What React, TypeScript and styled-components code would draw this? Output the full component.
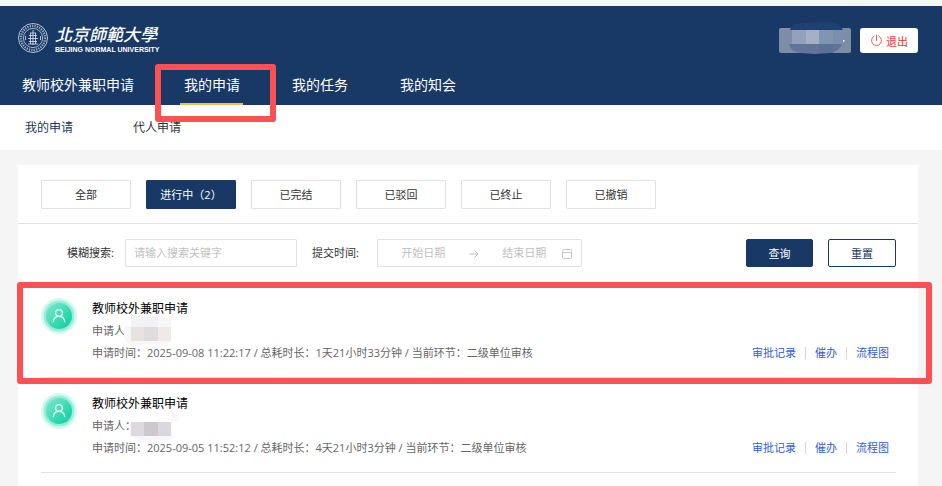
import React from "react";
import styled, { createGlobalStyle } from "styled-components";

const navy = "#183866";
const line = "#e1e2e7";
const highlight = "#fd5151";

const GlobalStyle = createGlobalStyle`
  *, *::before, *::after { box-sizing: border-box; }
  body {
    margin: 0;
    background: #f5f5f5;
    color: #333;
    font-family: "Open Sans", "Noto Sans CJK SC", sans-serif;
    font-size: 11px;
  }
  button, input { font-family: inherit; font-size: inherit; margin: 0; }
  a { text-decoration: none; }
`;

const Page = styled.div`
  position: relative;
  padding-top: 6px;
  min-height: 100vh;
  display: flex;
  flex-direction: column;
  overflow: hidden;
`;

const Header = styled.header`
  background: ${navy};
  color: #fff;
`;

const TopBar = styled.div`
  display: flex;
  justify-content: space-between;
  align-items: flex-start;
  min-height: 59px;
  padding: 16px 24px 0 18px;
`;

const Account = styled.div`
  display: flex;
  gap: 9px;
  padding-top: 6px;
`;

const UserButton = styled.button`
  position: relative;
  width: 72px;
  height: 25px;
  border: 0;
  border-radius: 2px;
  background: #7c8da8;
  padding: 0;
`;

const UserMask = styled.svg`
  position: absolute;
  left: 9px;
  top: -7px;
`;

const LogoutButton = styled.button`
  display: flex;
  align-items: center;
  justify-content: center;
  gap: 3px;
  width: 58px;
  height: 25px;
  border: 0;
  border-radius: 3px;
  background: #fff;
  color: #e8382f;
  padding: 0;
`;

const MainNav = styled.nav`
  display: flex;
  padding-left: 22px;
`;

const MainLink = styled.a<{ $lead?: boolean; $active?: boolean }>`
  position: relative;
  flex: 0 0 ${(p) => (p.$lead ? 162 : 108)}px;
  color: #fff;
  font-size: 14px;
  line-height: 40px;
  white-space: nowrap;
  ${(p) =>
    p.$active &&
    `&::after {
      content: "";
      position: absolute;
      left: -4px;
      bottom: 0;
      width: 63px;
      height: 2px;
      background: #f7bd51;
    }`}
`;

const SubNav = styled.nav`
  display: flex;
  padding-left: 25px;
  background: #fff;
`;

const SubLink = styled.a<{ $active?: boolean }>`
  flex: 0 0 108px;
  color: ${(p) => (p.$active ? navy : "#333")};
  font-size: 12px;
  line-height: 45px;
`;

const Card = styled.main`
  position: relative;
  flex: 1;
  margin: 15px 24px 0 18px;
  background: #fff;
`;

const Filters = styled.div`
  display: flex;
  gap: 15px;
  padding: 15px 23px 14px;
  border-bottom: 1px solid ${line};
`;

const FilterButton = styled.button<{ $active?: boolean }>`
  width: 90px;
  height: 29px;
  padding: 0 0 2px;
  border: 1px solid ${(p) => (p.$active ? navy : line)};
  border-radius: 1px;
  background: ${(p) => (p.$active ? navy : "#fff")};
  color: ${(p) => (p.$active ? "#fff" : "#333")};
`;

const SearchForm = styled.form`
  display: flex;
  align-items: center;
  gap: 15px;
  padding: 15px 22px 16px 49px;
`;

const Field = styled.div<{ $gap: number }>`
  display: flex;
  align-items: center;
  gap: ${(p) => p.$gap}px;
`;

const Label = styled.label`
  padding-bottom: 2px;
  white-space: nowrap;
`;

const TextInput = styled.input`
  width: 172px;
  height: 28px;
  padding: 0 8px 2px;
  border: 1px solid ${line};
  border-radius: 1px;
  outline: 0;
  &::placeholder { color: #bfbfbf; }
`;

const DateRange = styled.div`
  display: flex;
  align-items: center;
  width: 205px;
  height: 28px;
  padding: 0 9px 0 10px;
  border: 1px solid ${line};
  border-radius: 1px;
`;

const DateInput = styled.input`
  flex: 1;
  min-width: 0;
  padding: 0 0 2px;
  border: 0;
  outline: 0;
  background: none;
  text-align: center;
  &::placeholder { color: #bfbfbf; }
`;

const ArrowIcon = styled.svg`
  margin: 2px 10px 0;
`;

const CalendarIcon = styled.svg`
  margin: 1px 0 0 2px;
`;

const Actions = styled.div`
  display: flex;
  gap: 15px;
  margin-left: auto;
`;

const ActionButton = styled.button<{ $primary?: boolean }>`
  width: ${(p) => (p.$primary ? 67 : 68)}px;
  height: 28px;
  padding: 0;
  border: 1px solid ${navy};
  border-radius: 2px;
  background: ${(p) => (p.$primary ? navy : "#fff")};
  color: ${(p) => (p.$primary ? "#fff" : navy)};
`;

const List = styled.ul`
  list-style: none;
  margin: 0 22px 0 23px;
  padding: 0;
`;

const Item = styled.li`
  display: flex;
  gap: 15px;
  padding: 15px 7px 13px 0;
  border-bottom: 1px solid ${line};
`;

const Avatar = styled.svg`
  flex: none;
`;

const Info = styled.div`
  flex: 1;
  color: #666;
  line-height: 22px;
`;

const Title = styled.h2`
  margin: 0;
  color: #000;
  font-size: 12px;
  font-weight: 400;
  line-height: 22px;
`;

const Applicant = styled.div`
  position: relative;
`;

const Mask = styled.svg`
  position: absolute;
  left: 31px;
  top: -6px;
`;

const Links = styled.div`
  display: flex;
  align-self: flex-end;
  align-items: center;
  line-height: 22px;
`;

const RecordLink = styled.a`
  color: #2f5ddb;
  & + & {
    display: flex;
    align-items: center;
  }
  & + &::before {
    content: "";
    width: 1px;
    height: 12px;
    margin: 0 9px;
    background: #d6d6d6;
  }
`;

const NavHighlight = styled.div`
  position: absolute;
  left: 155px;
  top: 64px;
  width: 121px;
  height: 58px;
  border: 6px solid ${highlight};
  border-radius: 3px;
  pointer-events: none;
`;

const ItemHighlight = styled.div`
  position: absolute;
  left: -1px;
  right: -14px;
  top: 117px;
  height: 102px;
  border: 6px solid ${highlight};
  border-radius: 3px;
  pointer-events: none;
`;

const Logo = () => (
  <svg width="144" height="36" viewBox="0 0 144 36" role="img" aria-label="北京师范大学">
    <g fill="none" stroke="#dfe6ef">
      <circle cx="15" cy="16" r="14.5" strokeWidth="0.8" />
      <circle cx="15" cy="16" r="12" strokeWidth="2.4" strokeDasharray="1.3 1.1" opacity="0.65" />
      <circle cx="15" cy="16" r="9.6" strokeWidth="0.7" />
      <path d="M15 8v2M12 11h6M11 13.5h8M10 16.5h10M11 19.5h8M10 22h10M12.500 11v11M15 10v13M17.500 11v11" strokeWidth="0.8" />
      <path d="M7.500 14v4M22.500 14v4" strokeWidth="0.8" />
    </g>
    <text x="37" y="19" fill="#fff" fontSize="17" fontStyle="italic" fontWeight="500" fontFamily="'Noto Sans CJK TC', sans-serif">
      北京師範大學
    </text>
    <text x="37" y="30" fill="#fff" fontSize="7" fontWeight="700" fontFamily="'Liberation Sans', sans-serif">
      BEIJING NORMAL UNIVERSITY
    </text>
  </svg>
);

const PersonAvatar = () => (
  <Avatar width="36" height="36" viewBox="0 0 36 36" aria-hidden="true">
    <defs>
      <linearGradient id="avatarFill" x1="0" y1="0" x2="1" y2="1">
        <stop offset="0" stopColor="#80e8cf" />
        <stop offset="1" stopColor="#04cf9d" />
      </linearGradient>
    </defs>
    <circle cx="18" cy="18" r="18" fill="#d8f7ef" />
    <circle cx="18" cy="18" r="15.500" fill="#99edd9" />
    <circle cx="18" cy="18" r="13" fill="url(#avatarFill)" />
    <g fill="none" stroke="#effffb" strokeWidth="1.2" strokeLinecap="round">
      <circle cx="18" cy="15" r="3.400" />
      <path d="M12.200 23.700c.4-3.200 2.600-5.300 5.800-5.300s5.400 2.100 5.800 5.300" />
    </g>
  </Avatar>
);

type RecordItem = {
  id: number;
  title: string;
  meta: string;
  haze: string;
  tones: [string, string, string];
  tall: boolean;
};

const items: RecordItem[] = [
  {
    id: 1,
    title: "教师校外兼职申请",
    meta: "申请时间：2025-09-08 11:22:17 / 总耗时长：1天21小时33分钟 / 当前环节：二级单位审核",
    haze: "M8 1h28l12 5v21q-4 4-12 3H20l-9 2Q4 31 1 24V12h7z",
    tones: ["#e8e3e2", "#e0dbdc", "#eeeae7"],
    tall: true,
  },
  {
    id: 2,
    title: "教师校外兼职申请",
    meta: "申请时间：2025-09-05 11:52:12 / 总耗时长：4天21小时3分钟 / 当前环节：二级单位审核",
    haze: "M7 13h41V1l9 8v3h-9v13l4 2-6 4H20q-9 0-13-6z",
    tones: ["#dddadd", "#cbc9cc", "#dad8dc"],
    tall: false,
  },
];

const filters = ["全部", "进行中（2）", "已完结", "已驳回", "已终止", "已撤销"];

export default function App() {
  return (
    <>
      <GlobalStyle />
      <Page>
        <Header>
          <TopBar>
            <Logo />
            <Account>
              <UserButton type="button" aria-label="用户">
                <UserMask width="62" height="35" viewBox="0 0 62 35" aria-hidden="true">
                  <path d="M2 9Q4 2 14 2L43 1q9 1 12 8z" fill="#20416f" />
                  <path d="M1 9h53v14q-3 8-12 9l-15 1-15-1Q2 30 1 23z" fill="#627599" />
                  <path d="M1 9h3v14H1z" fill="#7c8da8" />
                  <path d="M4 9h14v14H4z" fill="#92a2bd" />
                  <path d="M18 9h13v14H18z" fill="#a5b0c8" />
                  <path d="M31 9h14v14H31z" fill="#8095b1" />
                  <path d="M45 9h9v14h-9z" fill="#7b8eae" />
                  <path d="M31 23h14v9H31z" fill="#5b7095" />
                  <path d="M55 19h2l-1 2h-1z" fill="#e9e6ed" />
                </UserMask>
              </UserButton>
              <LogoutButton type="button">
                <svg width="13" height="13" viewBox="0 0 13 13" fill="none" stroke="#ee5a4e" strokeLinecap="round" aria-hidden="true">
                  <path d="M6.500 1v5.500M4 2.200a5 5 0 1 0 5 0" />
                </svg>
                退出
              </LogoutButton>
            </Account>
          </TopBar>
          <MainNav>
            <MainLink href="#home" $lead>教师校外兼职申请</MainLink>
            <MainLink href="#applications" $active>我的申请</MainLink>
            <MainLink href="#tasks">我的任务</MainLink>
            <MainLink href="#notices">我的知会</MainLink>
          </MainNav>
        </Header>
        <SubNav>
          <SubLink href="#mine" $active>我的申请</SubLink>
          <SubLink href="#proxy">代人申请</SubLink>
        </SubNav>
        <Card>
          <Filters>
            {filters.map((name, i) => (
              <FilterButton key={name} type="button" $active={i === 1}>
                {name}
              </FilterButton>
            ))}
          </Filters>
          <SearchForm onSubmit={(e) => e.preventDefault()}>
            <Field $gap={11}>
              <Label htmlFor="keyword">模糊搜索:</Label>
              <TextInput id="keyword" placeholder="请输入搜索关键字" />
            </Field>
            <Field $gap={18}>
              <Label htmlFor="start">提交时间:</Label>
              <DateRange>
                <DateInput id="start" placeholder="开始日期" />
                <ArrowIcon width="10" height="10" viewBox="0 0 10 10" fill="none" stroke="#bfbfbf" aria-hidden="true">
                  <path d="M0.500 5h8.500M5.500 1.500L9 5 5.500 8.500" />
                </ArrowIcon>
                <DateInput aria-label="结束日期" placeholder="结束日期" />
                <CalendarIcon width="10" height="10" viewBox="0 0 10 10" fill="none" stroke="#c9c9c9" aria-hidden="true">
                  <rect x="0.500" y="0.500" width="9" height="9" rx="1" />
                  <path d="M0.500 3.500h9" />
                </CalendarIcon>
              </DateRange>
            </Field>
            <Actions>
              <ActionButton type="submit" $primary>查询</ActionButton>
              <ActionButton type="reset">重置</ActionButton>
            </Actions>
          </SearchForm>
          <List>
            {items.map((item) => (
              <Item key={item.id}>
                <PersonAvatar />
                <Info>
                  <Title>{item.title}</Title>
                  <Applicant>
                    申请人：
                    <Mask width="58" height="34" viewBox="0 0 58 34" aria-hidden="true">
                      <path d={item.haze} fill="#f7f7f8" />
                      {item.tall && <path d="M8 2h13v11H8zM21 2h14v11H21z" fill="#f3f2f4" />}
                      <path d="M8 13h13v14H8z" fill={item.tones[0]} />
                      <path d="M21 13h14v14H21z" fill={item.tones[1]} />
                      <path d="M35 13h13v14H35z" fill={item.tones[2]} />
                    </Mask>
                  </Applicant>
                  <div>{item.meta}</div>
                </Info>
                <Links>
                  <RecordLink href="#records">审批记录</RecordLink>
                  <RecordLink href="#urge">催办</RecordLink>
                  <RecordLink href="#flow">流程图</RecordLink>
                </Links>
              </Item>
            ))}
          </List>
          <ItemHighlight />
        </Card>
        <NavHighlight />
      </Page>
    </>
  );
}
